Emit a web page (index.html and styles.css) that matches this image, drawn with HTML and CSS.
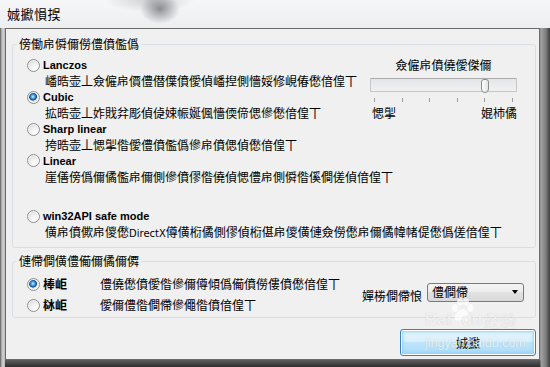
FILE: index.html
```html
<!DOCTYPE html>
<html lang="zh">
<head>
<meta charset="utf-8">
<title>娍擨愪捑</title>
<link rel="stylesheet" href="styles.css">
</head>
<body>
<div class="window">
  <div class="titlebar"><span class="title">娍擨愪捑</span></div>
  <div class="frame">
    <div class="client">
      <fieldset class="group group-filter">
        <legend>傍働帍僢儞僗僼僨儖僞</legend>
        <div class="filter-grid">
          <div class="opt opt-left">
            <div class="opt-head"><span class="radio"></span><span class="opt-name">Lanczos</span></div>
            <div class="opt-desc">嶓晧壶丄僉僱帍價僼僣僷僨僾偵嶓揑側懎娞修峴偆僽偣偟丅</div>
          </div>
          <div class="slider">
            <div class="slider-label">僉僱帍僨僥僾傑儞</div>
            <div class="track"><span class="thumb"></span></div>
            <div class="ticks"><i></i><i></i><i></i><i></i><i></i><i></i></div>
            <div class="scale"><span>愢揱</span><span>婫杮僪</span></div>
          </div>
          <div class="opt opt-left">
            <div class="opt-head"><span class="radio checked"></span><span class="opt-name">Cubic</span></div>
            <div class="opt-desc">拡晧壶丄妰戝弅彫偵偼娕帪娫偑懎偄偙偲傪僽偣偟丅</div>
          </div>
          <div class="opt opt-left">
            <div class="opt-head"><span class="radio"></span><span class="opt-name">Sharp linear</span></div>
            <div class="opt-desc">挎晧壶丄愢揱偺僾僼僨儖僞傪帍僨偲偵僽偣偟丅</div>
          </div>
          <div class="opt opt-wide">
            <div class="opt-head"><span class="radio"></span><span class="opt-name">Linear</span></div>
            <div class="opt-desc">崖僐傍僞儞僪儖帍儞側傪僨僇偺僥偵愢僼帍側僢偺傒僴傞偵偣偟丅</div>
          </div>
          <div class="opt opt-wide opt-win">
            <div class="opt-head"><span class="radio"></span><span class="opt-name">win32API safe mode</span></div>
            <div class="opt-desc">僙帍僨僛帍儍僽<span class="latin">DirectX</span>僔僙椼僪側僇偵椼偡帍儍僙僆僉僗僽帍儞僪幃帾偍僽僞傞偣偟丅</div>
          </div>
        </div>
      </fieldset>

      <fieldset class="group group-mode">
        <legend>僆僀僴僙僼僃儞僪儞僲</legend>
        <div class="mode-body">
          <div class="mode-list">
            <div class="mode-row"><span class="radio checked"></span><span class="mode-name">棒岠</span><span>僼僥僽僨僾偺傪儞僔傾僞僃僨僗僂僨僽偣偟丅</span></div>
            <div class="mode-row"><span class="radio"></span><span class="mode-name">栤岠</span><span>僾儞僼偺僴僀傪僶偺僨偣偟丅</span></div>
          </div>
          <div class="quality">
            <span class="quality-label">嬋椦僴僀悢</span>
            <div class="select"><span>僼僴僀</span><span class="arrow"></span></div>
          </div>
        </div>
      </fieldset>

      <div class="actions">
        <button class="btn" type="button">娍擨</button>
      </div>
    </div>
  </div>

  <div class="watermark">
    <div class="wm-top"><span class="wm-bai">Bai</span><svg class="wm-paw" width="26" height="24" viewBox="0 0 26 24"><ellipse cx="6" cy="10" rx="3" ry="4"/><ellipse cx="11" cy="4" rx="3" ry="3.6"/><ellipse cx="17" cy="4" rx="3" ry="3.6"/><ellipse cx="21.5" cy="10" rx="3" ry="4"/><path d="M13.5 11c-4 0-8 6-8 9 0 3 3 3 8 2 5 1 8 1 8-2 0-3-4-9-8-9z"/></svg><span class="wm-du">du</span><span class="wm-cn">经验</span></div>
    <div class="wm-url">jingyan.baidu.com</div>
  </div>
</div>
</body>
</html>
```

FILE: styles.css
```css
* {
  box-sizing: border-box;
}

html,
body {
  margin: 0;
  padding: 0;
}

body {
  width: 550px;
  height: 367px;
  overflow: hidden;
  background: #5a5a5a;
  color: #000;
  font-family: "Noto Sans CJK SC", "Noto Sans CJK JP", sans-serif;
  font-size: 12px;
}

.window {
  position: relative;
  width: 550px;
  height: 367px;
  display: flex;
  flex-direction: column;
}

.titlebar {
  flex: none;
  height: 28px;
  padding-left: 7px;
  display: flex;
  align-items: center;
  background:
    radial-gradient(ellipse 20px 15px at 160px 9px, rgba(60, 64, 70, 0.55), rgba(60, 64, 70, 0) 100%),
    radial-gradient(ellipse 45px 12px at 150px 0, rgba(110, 115, 120, 0.3), rgba(110, 115, 120, 0) 100%),
    linear-gradient(#f6f7f8, #eceef0);
}

.title {
  font-size: 13px;
  line-height: 16px;
  letter-spacing: 0.5px;
}

.frame {
  flex: 1;
  display: flex;
  padding: 0 10px 7px 5px;
  background:
    linear-gradient(90deg, #4e4e4e 0, #9a9a9a 1px, #d4d4d4 3px, #b6b6b6 5px, rgba(0, 0, 0, 0) 5px),
    linear-gradient(270deg, #3c3c3c 0, #7c7c7c 4px, #a2a2a2 9px, rgba(0, 0, 0, 0) 10px),
    linear-gradient(0deg, #2e2e2e 0, #5e5e5e 7px, rgba(0, 0, 0, 0) 7px),
    #8a8a8a;
}

.client {
  flex: 1;
  display: flex;
  flex-direction: column;
  border: 1px solid #6a6a6a;
  background: #f0f0f0;
}

.group {
  margin: 7px 3px 0 6px;
  border: 1px solid #d5dfe5;
  border-radius: 3px;
  min-width: 0;
}

.group legend {
  margin-left: -9px;
  padding: 0 2px;
  height: 16px;
  line-height: 16px;
}

.group-filter {
  padding: 5px 18px 7.5px 13px;
}

.filter-grid {
  display: grid;
  grid-template-columns: 1fr 147px;
}

.opt {
  height: 31.5px;
}

.opt-left {
  grid-column: 1;
}

.opt-wide {
  grid-column: 1 / -1;
}

.opt-win {
  margin-top: 24px;
}

.opt-head {
  display: flex;
  align-items: center;
  height: 16px;
}

.radio {
  flex: none;
  width: 13px;
  height: 13px;
  margin: 0 3px 0 1px;
  border-radius: 50%;
  border: 1px solid #8e8f8f;
  background: radial-gradient(circle at 62% 68%, #ffffff 0, #f2f2f2 35%, #d9d9d9 75%, #cdcdcd 100%);
  box-shadow: inset 0 0 0 1px rgba(255, 255, 255, 0.85);
}

.radio.checked {
  background: radial-gradient(circle at 45% 42%, #d4efff 0, #62b6ef 1.4px, #2273c2 2.8px, #16497d 3.6px, #e4e4e4 4.3px, #f8f8f8 100%);
}

.opt-name {
  font-family: "Liberation Sans", Arial, sans-serif;
  font-weight: bold;
  font-size: 11px;
  line-height: 16px;
}

.opt-desc {
  height: 15.5px;
  line-height: 15.5px;
  padding-left: 19px;
  white-space: nowrap;
}

.latin {
  font-family: "DejaVu Sans", sans-serif;
  font-size: 10px;
}

.slider {
  grid-column: 2;
  grid-row: 1 / 3;
  display: flex;
  flex-direction: column;
}

.slider-label {
  height: 16px;
  line-height: 16px;
  text-align: center;
}

.track {
  position: relative;
  margin-top: 5px;
  height: 14px;
  border: 1px solid #c6c6c6;
  border-top-color: #adadad;
  border-radius: 1px;
  background: linear-gradient(#e2e5e7, #f1f1f1);
}

.thumb {
  position: absolute;
  left: 110px;
  top: 0;
  width: 8px;
  height: 14px;
  border: 1px solid #8a8a8a;
  border-radius: 3px 3px 4px 4px;
  background: linear-gradient(90deg, #ffffff, #e3e3e3);
}

.ticks {
  display: flex;
  justify-content: space-between;
  height: 4px;
  margin-top: 6px;
  padding: 0 4px;
}

.ticks i {
  width: 1px;
  height: 4px;
  background: #9c9c9c;
}

.scale {
  display: flex;
  justify-content: space-between;
  margin-top: 3px;
  padding-left: 2px;
  line-height: 16px;
}

.group-mode {
  margin-top: 5px;
  padding: 7px 11px 4px 13px;
}

.mode-body {
  display: flex;
}

.mode-list {
  display: flex;
  flex-direction: column;
  gap: 5px;
}

.mode-row {
  display: flex;
  align-items: center;
  height: 16px;
  line-height: 16px;
  white-space: nowrap;
}

.mode-name {
  width: 57px;
  font-weight: bold;
}

.quality {
  margin-left: auto;
  align-self: flex-end;
  margin-bottom: 9px;
  display: flex;
  align-items: center;
  gap: 5px;
}

.quality-label {
  margin-top: 8px;
  line-height: 16px;
}

.select {
  width: 97px;
  height: 19px;
  padding: 0 5px 0 4px;
  display: flex;
  align-items: center;
  justify-content: space-between;
  border: 1px solid #7a7a7a;
  border-radius: 3px;
  background: linear-gradient(#f4f4f4 0, #ececec 50%, #e2e2e2 50%, #d8d8d8 100%);
  line-height: 16px;
}

.arrow {
  width: 0;
  height: 0;
  border-left: 3.5px solid transparent;
  border-right: 3.5px solid transparent;
  border-top: 4px solid #000;
}

.actions {
  display: flex;
  justify-content: flex-end;
  margin: 11px 3px 0 0;
}

.btn {
  width: 136px;
  height: 27px;
  padding: 0;
  border: 1px solid #3c7fb1;
  border-radius: 3px;
  background: linear-gradient(#e6f5fd 0, #d9f0fc 45%, #bee6fd 50%, #a7d9f5 100%);
  box-shadow: inset 0 0 0 1px #ffffff, inset 0 0 3px 2px #8fd3f7;
  color: #000;
  font-family: inherit;
  font-size: 12px;
  line-height: 16px;
}

.watermark {
  position: absolute;
  left: 425px;
  top: 300px;
  color: rgba(255, 255, 255, 0.72);
  text-shadow: 0 0 1px rgba(120, 120, 120, 0.35);
  pointer-events: none;
}

.wm-top {
  display: flex;
  align-items: flex-end;
  height: 30px;
}

.wm-bai,
.wm-du {
  font-family: "Liberation Sans", Arial, sans-serif;
  font-weight: bold;
  font-size: 17px;
  line-height: 20px;
}

.wm-paw {
  fill: rgba(255, 255, 255, 0.72);
  margin: 0 -14px 8px -2px;
}

.wm-du {
  margin-right: 2px;
}

.wm-cn {
  font-size: 16px;
  line-height: 20px;
}

.wm-url {
  margin-top: 6px;
  font-family: "Liberation Sans", Arial, sans-serif;
  font-size: 12.5px;
  line-height: 14px;
}
```
